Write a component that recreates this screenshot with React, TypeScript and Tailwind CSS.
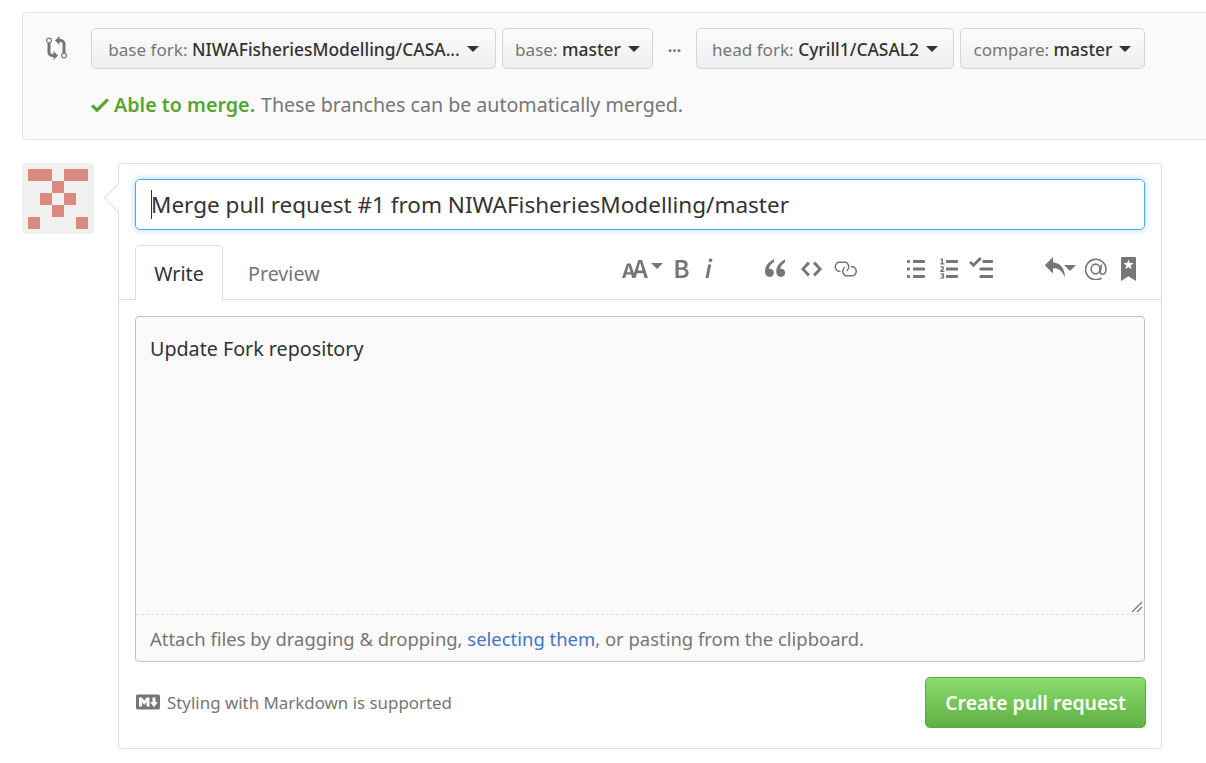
import type { ReactNode } from 'react';

const FONT = "font-['Noto_Sans','Open_Sans',sans-serif]";

function Icon({ w, h, d, className }: { w: number; h: number; d: string; className?: string }) {
    return (
        <svg viewBox={`0 0 ${w} ${h}`} width={w * 1.5} height={h * 1.5} className={`shrink-0 fill-current ${className ?? ''}`}>
            <path d={d} />
        </svg>
    );
}

const paths = {
    compare: "M5 12H4c-.27-.02-.48-.11-.69-.31-.21-.2-.3-.42-.31-.69V4.72A1.993 1.993 0 0 0 2 1a1.993 1.993 0 0 0-1 3.72V11c.03.78.34 1.47.94 2.06.6.59 1.28.91 2.06.94h1v2l3-3-3-3v2zM2 1.8c.66 0 1.2.55 1.2 1.2 0 .65-.55 1.2-1.2 1.2C1.35 4.2.8 3.65.8 3c0-.65.55-1.2 1.2-1.2zm11 9.48V5c-.03-.78-.34-1.47-.94-2.06-.6-.59-1.28-.91-2.06-.94H9V0L6 3l3 3V4h1c.27.02.48.11.69.31.21.2.3.42.31.69v6.28A1.993 1.993 0 0 0 12 15a1.993 1.993 0 0 0 1-3.72zm-1 2.92c-.66 0-1.2-.55-1.2-1.2 0-.65.55-1.2 1.2-1.2.65 0 1.2.55 1.2 1.2 0 .65-.55 1.2-1.2 1.2z",
    check: "M12 5l-8 8-4-4 1.5-1.5L4 10l6.5-6.5L12 5z",
    textSize: "M13.62 9.08L12.1 3.66h-.06l-1.5 5.42h3.08zM5.7 10.13S4.68 6.52 4.53 6.02h-.08l-1.13 4.11H5.7zM17.31 14h-2.25l-.95-3.25h-4.07L9.09 14H6.84l-.69-2.33H2.87L2.17 14H0l3.3-9.59h2.5l2.17 6.34L10.86 2h2.52l3.94 12h-.01z",
    bold: "M1 2h3.83c2.48 0 4.3.75 4.3 2.95 0 1.14-.63 2.23-1.67 2.61v.06c1.33.3 2.3 1.23 2.3 2.86 0 2.39-1.97 3.52-4.61 3.52H1V2zm3.66 4.95c1.67 0 2.38-.66 2.38-1.69 0-1.17-.78-1.61-2.34-1.61H3.13v3.3h1.53zm.27 5.39c1.77 0 2.75-.64 2.75-1.98 0-1.27-.95-1.81-2.75-1.81h-1.8v3.8h1.8v-.01z",
    italic: "M2.81 5h1.98L3 14H1l1.81-9zm.36-2.7c0-.7.58-1.3 1.33-1.3.56 0 1.13.38 1.13 1.03 0 .75-.59 1.3-1.33 1.3-.58 0-1.13-.38-1.13-1.03z",
    quote: "M6 0C2.5 2 0 4.6 0 8.2 0 10.6 1.4 12 3.1 12c1.6 0 2.8-1.2 2.8-2.8 0-1.5-1-2.7-2.5-2.7-.3 0-.6.1-.8.1.2-1.6 1.7-3.6 3.4-4.6L6 0zm7.5 0C10 2 7.5 4.6 7.5 8.2c0 2.4 1.4 3.8 3.1 3.8 1.6 0 2.8-1.2 2.8-2.8 0-1.5-1-2.7-2.5-2.7-.3 0-.6.1-.8.1.2-1.6 1.7-3.6 3.4-4.6L13.5 0z",
    code: "M9.5 3L8 4.5 11.5 8 8 11.5 9.5 13 14 8 9.5 3zm-5 0L0 8l4.5 5L6 11.5 2.5 8 6 4.5 4.5 3z",
    link: "M4 9h1v1H4c-1.5 0-3-1.69-3-3.5S2.55 3 4 3h4c1.45 0 3 1.69 3 3.5 0 1.41-.91 2.72-2 3.25V8.59c.58-.45 1-1.27 1-2.09C10 5.22 8.98 4 8 4H4c-.98 0-2 1.22-2 2.5S3 9 4 9zm9-3h-1v1h1c1 0 2 1.22 2 2.5S13.98 12 13 12H9c-.98 0-2-1.22-2-2.5 0-.83.42-1.64 1-2.09V6.25c-1.09.53-2 1.84-2 3.25C6 11.31 7.55 13 9 13h4c1.45 0 3-1.69 3-3.5S14.5 6 13 6z",
    listUl: "M2 13c0 .59 0 1-.59 1H.59C0 14 0 13.59 0 13c0-.59 0-1 .59-1h.81c.59 0 .59.41.59 1H2zm2.59-9h6.81c.59 0 .59-.41.59-1 0-.59 0-1-.59-1H4.59C4 2 4 2.41 4 3c0 .59 0 1 .59 1zM1.41 7H.59C0 7 0 7.41 0 8c0 .59 0 1 .59 1h.81c.59 0 .59-.41.59-1 0-.59 0-1-.59-1h.01zm0-5H.59C0 2 0 2.41 0 3c0 .59 0 1 .59 1h.81c.59 0 .59-.41.59-1 0-.59 0-1-.59-1h.01zm10 5H4.59C4 7 4 7.41 4 8c0 .59 0 1 .59 1h6.81c.59 0 .59-.41.59-1 0-.59 0-1-.59-1h.01zm0 5H4.59C4 12 4 12.41 4 13c0 .59 0 1 .59 1h6.81c.59 0 .59-.41.59-1 0-.59 0-1-.59-1h.01z",
    listOl: "M12 13c0 .59 0 1-.59 1H4.59C4 14 4 13.59 4 13c0-.59 0-1 .59-1h6.81c.59 0 .59.41.59 1H12zM4.59 4h6.81c.59 0 .59-.41.59-1 0-.59 0-1-.59-1H4.59C4 2 4 2.41 4 3c0 .59 0 1 .59 1zm6.81 3H4.59C4 7 4 7.41 4 8c0 .59 0 1 .59 1h6.81c.59 0 .59-.41.59-1 0-.59 0-1-.59-1zM2 1h-.72c-.3.19-.58.25-1.03.34V2H1v2.14H.16V5H3v-.86H2V1zm.25 8.13c-.17 0-.45.03-.66.06.53-.56 1.14-1.25 1.14-1.89C2.71 6.52 2.17 6 1.37 6c-.59 0-.97.2-1.38.66l.5.5c.19-.2.41-.41.69-.41.28 0 .52.19.52.55 0 .53-.83 1.19-1.7 2.12V10h3v-.87h-.75zM2.2 12.6c.42-.17.6-.47.6-.86 0-.75-.6-1.14-1.42-1.14-.48 0-.9.17-1.28.5l.45.55c.22-.2.45-.33.72-.33.29 0 .47.14.47.39 0 .28-.2.47-.84.47v.62c.75 0 .95.17.95.5 0 .28-.25.44-.59.44-.3 0-.56-.14-.8-.38l-.42.58c.28.33.72.56 1.3.56.86 0 1.56-.44 1.56-1.23 0-.52-.33-.86-.7-.97z",
    tasklist: "M15.41 9H7.59C7 9 7 8.59 7 8c0-.59 0-1 .59-1h7.81c.59 0 .59.41.59 1 0 .59 0 1-.59 1h.01zM9.59 4C9 4 9 3.59 9 3c0-.59 0-1 .59-1h5.81c.59 0 .59.41.59 1 0 .59 0 1-.59 1H9.59zM0 3.91l1.41-1.3L3 4.2 7.09 0 8.5 1.41 3 6.91l-3-3zM7.59 12h7.81c.59 0 .59.41.59 1 0 .59 0 1-.59 1H7.59C7 14 7 13.59 7 13c0-.59 0-1 .59-1z",
    reply: "M6 3.5c3.92.44 8 3.125 8 10-2.312-5.062-4.75-6-8-6V11L.5 5.5 6 0v3.5z",
    bookmark: "M9 0H1C.27 0 0 .27 0 1v15l5-3.09L10 16V1c0-.73-.27-1-1-1zm-.78 4.25L6.36 5.61l.72 2.16c.06.22-.02.28-.2.17L5 6.6 3.12 7.94c-.19.11-.25.05-.2-.17l.72-2.16-1.86-1.36c-.17-.16-.14-.23.09-.23l2.3-.03.7-2.16h.25l.7 2.16 2.3.03c.23 0 .27.08.09.23h.01z",
    markdown: "M14.85 3H1.15C.52 3 0 3.52 0 4.15v7.69C0 12.48.52 13 1.15 13h13.69c.64 0 1.15-.52 1.15-1.15v-7.7C16 3.52 15.48 3 14.85 3zM9 11H7V8L5.5 9.92 4 8v3H2V5h2l1.5 2L7 5h2v6zm2.99.5L9.5 8H11V5h2v3h1.5l-2.51 3.5z",
};

function Caret({ className }: { className?: string }) {
    return <span className={`inline-block border-x-[6px] border-t-[6px] border-x-transparent border-t-current ${className ?? ''}`} />;
}

function BranchButton({ label, value, width }: { label: string; value: string; width: string }) {
    return (
        <div className={`${width} h-[41px] flex items-center justify-center gap-[7px] rounded-[5px] border border-[#d5d5d5] bg-gradient-to-b from-[#fcfcfc] to-[#eeeeee] pt-px text-[17.1px] whitespace-nowrap`}>
            <span className="text-[#767676]">{label} <span className="text-[17.4px] font-medium text-[#333]">{value}</span></span>
            <Caret className="text-[#333]" />
        </div>
    );
}

function Tool({ ml, children }: { ml: string; children: ReactNode }) {
    return <div className={`${ml} flex items-center`}>{children}</div>;
}

// 5x5 identicon
const cells = [
    1, 1, 0, 1, 1,
    0, 0, 1, 0, 0,
    0, 1, 0, 1, 0,
    0, 0, 1, 0, 0,
    1, 0, 0, 0, 1,
];

export default function App() {
    return (
        <div className={`${FONT} w-[1206px] h-[763px] overflow-hidden bg-white pt-3 pl-[22px] text-[#333]`}>
            {/* Compare bar */}
            <div className="h-[128px] rounded-l-[4px] border border-r-0 border-[#e5e5e5] bg-[#fafafa] pt-[15px] pl-[22px]">
                <div className="flex items-center">
                    <Icon w={14} h={16} d={paths.compare} className="ml-px mb-[2px] text-[#767676]" />
                    <div className="ml-[24px] flex items-center gap-[6px]">
                        <BranchButton label="base fork:" value="NIWAFisheriesModelling/CASA..." width="w-[405px]" />
                        <BranchButton label="base:" value="master" width="w-[151px]" />
                        <span className="mx-[4.5px] mt-[3px] w-[22px] text-center text-[16px] font-bold leading-none text-[#767676]">···</span>
                        <BranchButton label="head fork:" value="Cyrill1/CASAL2" width="w-[258px]" />
                        <BranchButton label="compare:" value="master" width="w-[185px]" />
                    </div>
                </div>
                <div className="mt-[20px] ml-[46px] flex items-center text-[19.7px] leading-[32px]">
                    <Icon w={12} h={16} d={paths.check} className="mr-[5px] text-[#55a532]" />
                    <span className="font-semibold text-[#55a532]">Able to merge.</span>
                    <span className="ml-[6px] text-[19.6px] text-[#767676]">These branches can be automatically merged.</span>
                </div>
            </div>

            <div className="mt-[23px] flex gap-6">
                {/* Avatar */}
                <div className="h-[71px] w-[72px] rounded-[4px] bg-[#f0f0f0] p-[6px]">
                    <div className="grid grid-cols-5">
                        {cells.map((on, i) => (
                            <div key={i} className={`h-3 w-3 ${on ? 'bg-[#db8a80]' : ''}`} />
                        ))}
                    </div>
                </div>

                {/* Form card */}
                <div className="relative h-[586px] w-[1044px] rounded-[4px] border border-[#dddddd] bg-white">
                    <div className="absolute -left-[11px] top-[24px] h-[20px] w-[20px] rotate-45 border-b border-l border-[#dddddd] bg-white" />
                    <div className="relative px-4 pt-[15px]">
                        <div className="flex h-[51px] items-center rounded-[5px] border border-[#51a7e8] pl-[15px] text-[22.5px] text-[#333] shadow-[0_0_6px_rgba(81,167,232,0.5)]">
                            <span className="-mr-px h-[29px] w-px bg-[#333]" />
                            Merge pull request #1 from NIWAFisheriesModelling/master
                        </div>
                    </div>

                    {/* Tabs and toolbar */}
                    <div className="relative mt-[15px] flex h-[55px] items-start border-b border-[#dddddd] pl-4 text-[#767676]">
                        <div className="flex h-[55px] w-[88px] items-center justify-center rounded-t-[5px] border border-b-0 border-[#dddddd] bg-white pt-[2px] text-[19.7px] text-[#333]">Write</div>
                        <div className="flex h-[55px] items-center pl-[25px] pt-[2px] text-[19.7px]">Preview</div>
                        <div className="ml-auto mr-[25px] flex items-center pt-[12px]">
                            <Tool ml="ml-0"><Icon w={18} h={16} d={paths.textSize} /><Caret className="ml-[2px] -mt-[6px]" /></Tool>
                            <Tool ml="ml-[11px]"><Icon w={10} h={16} d={paths.bold} /></Tool>
                            <Tool ml="ml-[15px]"><Icon w={6} h={16} d={paths.italic} /></Tool>
                            <Tool ml="ml-[52px]"><Icon w={13.5} h={12} d={paths.quote} className="-mt-[2px]" /></Tool>
                            <Tool ml="ml-[16px]"><Icon w={14} h={16} d={paths.code} /></Tool>
                            <Tool ml="ml-[11px]"><Icon w={16} h={16} d={paths.link} /></Tool>
                            <Tool ml="ml-[50px]"><Icon w={12} h={16} d={paths.listUl} /></Tool>
                            <Tool ml="ml-[15px]"><Icon w={12} h={16} d={paths.listOl} /></Tool>
                            <Tool ml="ml-[11px]"><Icon w={16} h={16} d={paths.tasklist} /></Tool>
                            <Tool ml="ml-[51px]"><Icon w={14} h={16} d={paths.reply} /><Caret className="-ml-px -mt-[2px]" /></Tool>
                            <Tool ml="ml-[9px]">
                                <svg viewBox="0 0 22 22" width="22" height="22" className="shrink-0 fill-none stroke-current" strokeWidth="1.6">
                                    <path d="M16.5 20A10.2 10.2 0 1 1 21 11c0 3.6-1.8 5.3-3.6 5.3-1.6 0-2.3-1-2-2.6L16.5 6.5" />
                                    <ellipse cx="10.6" cy="11" rx="4.4" ry="4.9" />
                                </svg>
                            </Tool>
                            <Tool ml="ml-[14px]"><Icon w={10} h={16} d={paths.bookmark} /></Tool>
                        </div>
                    </div>

                    {/* Comment box */}
                    <div className="mx-4 mt-4 h-[346px] rounded-[4px] border border-[#c3c3c3] bg-[#fafafa]">
                        <div className="relative h-[298px] border-b border-dashed border-[#dddddd] px-[14px] pt-[16px] text-[19.7px] leading-[32px] text-[#333]">
                            Update Fork repository
                            <svg viewBox="0 0 12 12" width="12" height="12" className="absolute bottom-[1px] right-[1px] stroke-[#777]">
                                <path d="M1 11 L11 1 M6 11 L11 6" strokeWidth="1.2" />
                            </svg>
                        </div>
                        <div className="px-[14px] pt-[8px] text-[18.45px] leading-[32px] text-[#767676]">
                            Attach files by dragging &amp; dropping, <span className="text-[#4078c0]">selecting them</span>, or pasting from the clipboard.
                        </div>
                    </div>

                    {/* Footer */}
                    <div className="ml-[17px] mr-[15px] mt-[15px] flex items-center justify-between">
                        <div className="flex items-center gap-[7px] text-[16.9px] text-[#767676]">
                            <Icon w={16} h={16} d={paths.markdown} />
                            <span>Styling with Markdown is supported</span>
                        </div>
                        <div className="flex h-[51px] w-[221px] items-center justify-center rounded-[5px] border border-[#5ca941] bg-gradient-to-b from-[#8add6d] to-[#60b044] text-[19.4px] font-semibold text-white">
                            Create pull request
                        </div>
                    </div>
                </div>
            </div>
        </div>
    );
}
